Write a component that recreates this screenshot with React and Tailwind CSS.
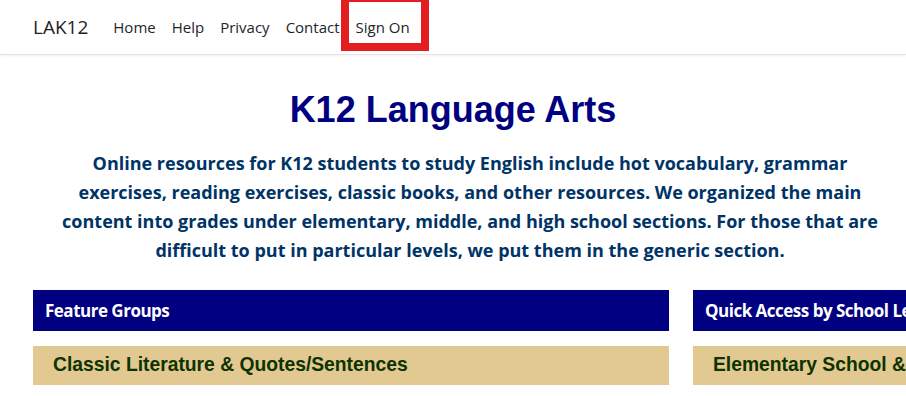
import React from "react";

const lines = [
  "Online resources for K12 students to study English include hot vocabulary, grammar",
  "exercises, reading exercises, classic books, and other resources. We organized the main",
  "content into grades under elementary, middle, and high school sections. For those that are",
  "difficult to put in particular levels, we put them in the generic section.",
];

export default function App() {
  return (
    <div className="w-[906px] h-[396px] overflow-hidden bg-white">
      <nav className="h-[55px] border-b border-[#e3e3e3] shadow-[0_1px_3px_rgba(0,0,0,0.06)] flex items-center pl-[33px] font-['Open_Sans',sans-serif] text-[#212529]">
        <a className="text-[19px] text-[#1e1e1e] mr-[17px] leading-none">LAK12</a>
        <div className="flex items-center text-[15px] leading-none">
          <a className="px-[8px]">Home</a>
          <a className="px-[8px]">Help</a>
          <a className="px-[8px]">Privacy</a>
          <a className="px-[8px]">Contact</a>
          <a className="relative px-[8px]">
            Sign On
            <span className="absolute left-[-7px] right-[-11px] top-[-26px] bottom-[-16px] border-[8px] border-[#e41e20]"></span>
          </a>
        </div>
      </nav>
      <main className="flex flex-col items-center">
        <h1 className="mt-[33px] text-[36px] leading-[44px] font-bold text-[#000080] font-['Liberation_Sans',Arial,sans-serif]">
          K12 Language Arts
        </h1>
        <p className="mt-[17px] pl-[34px] text-center text-[18px] leading-[29px] font-bold text-[#003366] font-['Open_Sans',sans-serif] whitespace-nowrap">
          {lines.map((l, i) => (
            <span key={i} className="block">{l}</span>
          ))}
        </p>
      </main>
      <div className="mt-[25px] flex gap-[24px] pl-[33px]">
        {[
          ["Feature Groups", "Classic Literature & Quotes/Sentences"],
          ["Quick Access by School Levels", "Elementary School & Middle School"],
        ].map(([h, s], i) => (
          <div key={i} className="w-[636px] shrink-0 flex flex-col gap-[15px]">
            <div className="h-[41px] bg-[#000080] flex items-center px-[12px] text-white text-[17px] font-bold font-['Open_Sans',sans-serif] tracking-[-0.5px]">
              {h}
            </div>
            <div className="h-[39px] bg-[#e2c891] flex items-center px-[20px] text-[#0c3300] text-[19.3px] font-bold font-['Liberation_Sans',Arial,sans-serif]">
              {s}
            </div>
          </div>
        ))}
      </div>
    </div>
  );
}
